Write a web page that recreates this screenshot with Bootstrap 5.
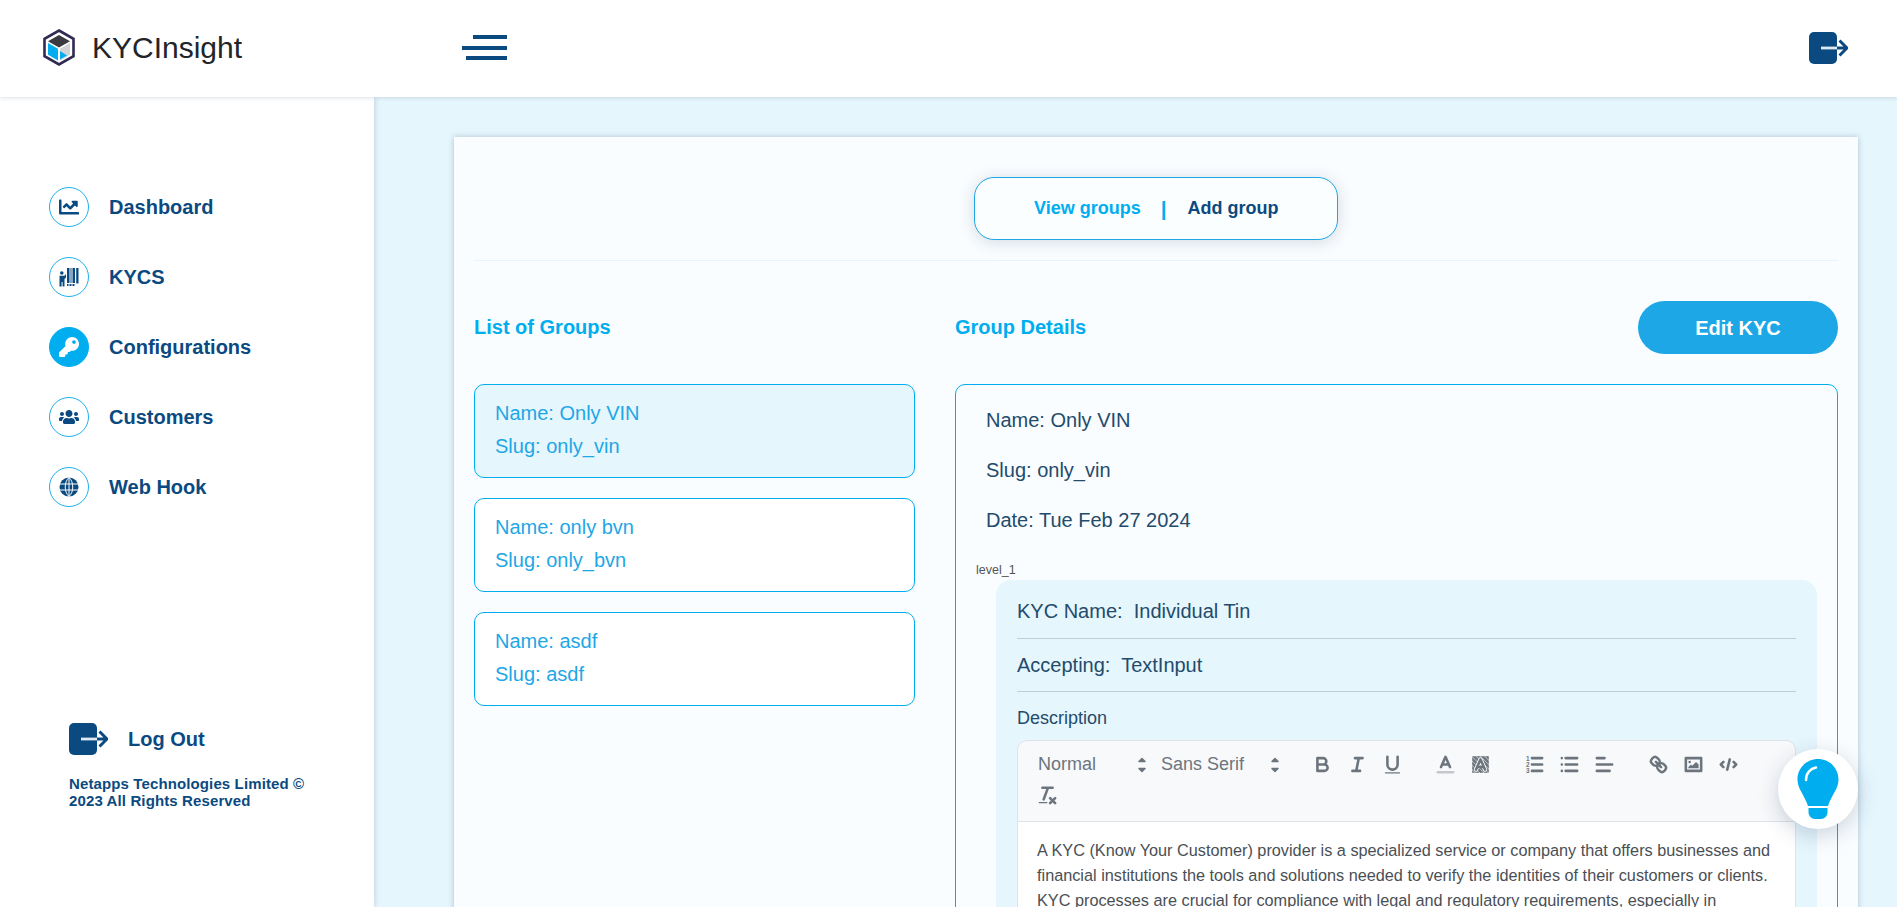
<!DOCTYPE html>
<html lang="en">

<head>
  <meta charset="UTF-8" />
  <meta name="viewport" content="width=device-width, initial-scale=1" />
  <title>KYCInsight</title>
  <link href="https://cdn.jsdelivr.net/npm/bootstrap@5.3.3/dist/css/bootstrap.min.css" rel="stylesheet">
  <style>
    body { height: 100vh; overflow: hidden; font-family: "Liberation Sans", Arial, sans-serif; background: #e6f6fd; }
    .top-bar { height: 97px; flex: none; background: #fff; position: relative; z-index: 3; box-shadow: 0 1px 4px rgba(0, 40, 80, .14); padding: 0 49px 2px 43px; }
    .brand-box { width: 419px; }
    .brand-name { font-size: 30px; color: #212529; margin-left: 17px; line-height: 1; }
    .burger { width: 45px; }
    .burger i { display: block; height: 4px; background: #0b4a7f; margin-left: auto; }
    .burger i + i { margin-top: 6.5px; }
    .side-bar { width: 374px; flex: none; background: #fff; position: relative; z-index: 2; box-shadow: 1px 0 5px rgba(0, 40, 80, .16); padding: 90px 0 98px 49px; }
    .side-item { height: 40px; margin-bottom: 30px; color: #0b4a80; font-size: 20px; font-weight: 700; text-decoration: none; }
    .side-dot { width: 40px; height: 40px; border: 1px solid #1eb0ee; border-radius: 50%; margin-right: 20px; color: #0b4a80; }
    .side-dot.is-on { background: #00aeef; border-color: #00aeef; color: #fff; }
    .logout-row { padding-left: 20px; color: #0b4a80; font-size: 20px; font-weight: 700; height: 32px; }
    .logout-row svg { margin-right: 20px; }
    .copy-text { margin: 20px 0 0 20px; width: 250px; color: #0b4a80; font-size: 15px; line-height: 17px; font-weight: 700; letter-spacing: .12px; }
    .main-area { padding: 40px 39px 0 80px; min-width: 0; }
    .sheet { background: #fafdff; padding: 40px 20px 0; box-shadow: 0 0 6px rgba(0, 40, 80, .25); min-height: 900px; }
    .tab-pill { width: 364px; height: 63px; border: 1px solid #1ea7e6; border-radius: 20px; box-shadow: 0 2px 16px rgba(0, 40, 80, .16); font-size: 18px; font-weight: 700; padding-left: 59px; background: #fbfeff; }
    .tab-on { color: #00aeef; }
    .tab-off { color: #0b4a7f; }
    .tab-sep { color: #00aeef; margin: 0 21px 0 20px; font-weight: 700; font-size: 21px; line-height: 1; }
    .sheet-rule { border-top: 1px solid #e5f5fd; margin-top: 20px; height: 41px; }
    .col-list { width: 441px; flex: none; margin-right: 40px; }
    .col-detail { flex: 1; min-width: 0; }
    .col-title { color: #00aeef; font-size: 20px; font-weight: 700; height: 53px; line-height: 52px; margin-bottom: 30px; }
    .edit-btn { width: 200px; height: 53px; border-radius: 27px; background: #1ea7e6; border: 0; color: #fff; font-size: 20px; font-weight: 700; }
    .edit-btn:hover { background: #1ea7e6; color: #fff; }
    .group-box { height: 94px; border: 1px solid #00aeef; border-radius: 10px; padding: 12px 20px; margin-bottom: 20px; background: #fff; color: #1ea7e6; font-size: 20px; line-height: 33px; }
    .group-box.is-on { background: #e6f6fd; }
    .detail-box { border: 1px solid #00aeef; border-radius: 10px; padding: 20px 20px 0 20px; color: #234b6b; font-size: 20px; }
    .detail-line { line-height: 30px; margin: 0 0 20px 10px; }
    .level-tag { font-size: 12.5px; line-height: 16px; color: #555; margin-top: 27px; margin-bottom: 2px; }
    .kyc-box { margin: 0 0 0 20px; background: #e6f6fd; border-radius: 15px; padding: 16px 21px 0; }
    .kyc-line { line-height: 30px; padding-bottom: 11px; border-bottom: 1px solid #c0ced8; margin-bottom: 11px; }
    .kyc-line:first-child { padding-bottom: 12px; }
    .desc-label { font-size: 18px; line-height: 26px; color: #234b6b; margin-top: 13px; margin-bottom: 9px; }
    .ed-bar { background: #f8f9fb; border: 1px solid #dde3e8; border-radius: 10px 10px 0 0; padding: 8px 12px 10px; }
    .ed-group { margin-right: 19px; }
    .ed-group.is-tight { margin-right: 18px; }
    .ed-pick { height: 31px; padding-left: 8px; color: #6c757d; font-size: 18px; line-height: 31px; }
    .ed-pick svg { margin-left: auto; }
    .pick-a { width: 123px; }
    .pick-b { width: 133px; }
    .ed-btn { width: 35px; height: 31px; }
    .ed-btn svg { width: 23px; height: 23px; fill: none; stroke: #6c757d; stroke-width: 2; stroke-linecap: round; stroke-linejoin: round; }
    .ed-btn .solid { fill: #6c757d; stroke: none; }
    .ed-text { background: #fff; border: 1px solid #dde3e8; border-top: 0; padding: 16px 19px; color: #4a4f55; font-size: 16.25px; line-height: 25px; }
    .help-fab { position: fixed; left: 1778px; top: 749px; width: 80px; height: 80px; border-radius: 50%; background: #fff; box-shadow: 0 6px 22px rgba(0, 40, 80, .2); z-index: 5; }
  </style>
</head>

<body class="d-flex flex-column">
  <svg width="0" height="0" class="position-absolute">
    <symbol id="exit-icon" viewBox="0 0 39 32">
      <rect x="0" y="0" width="28" height="32" rx="5" fill="#0b4a80" />
      <path d="M12 16H28" stroke="#dfeaf3" stroke-width="2.800" />
      <path d="M28 16H37M30.500 8.500L38 16L30.500 23.500" stroke="#0b4a80" stroke-width="3" fill="none" />
    </symbol>
  </svg>

  <header class="top-bar d-flex align-items-center">
    <div class="brand-box d-flex align-items-center">
      <svg width="32" height="37" viewBox="0 0 32 37">
        <path d="M16 1.500L30.500 9.800V27.200L16 35.500L1.500 27.200V9.800Z" fill="#fff" stroke="#2f2b52" stroke-width="2.600" />
        <path d="M16 6L27 12.300L16 18.500L5 12.300Z" fill="#3b3a40" />
        <path d="M5 14L15 19.800V31.500L5 25.700Z" fill="#00aeef" />
        <path d="M17 19.800L27 14V25.700L17 31.500Z" fill="#d2d4d6" />
        <path d="M17 22L24 26.500L17 30.500Z" fill="#00aeef" />
      </svg>
      <span class="brand-name">KYCInsight</span>
    </div>
    <div class="burger">
      <i style="width: 34px"></i>
      <i style="width: 45px"></i>
      <i style="width: 41px"></i>
    </div>
    <svg class="ms-auto" width="39" height="32"><use href="#exit-icon" /></svg>
  </header>

  <div class="d-flex flex-grow-1" style="min-height: 0">
    <aside class="side-bar d-flex flex-column">
      <a href="#" class="side-item d-flex align-items-center">
        <span class="side-dot d-flex align-items-center justify-content-center">
          <svg width="20" height="20" viewBox="0 0 512 512" fill="currentColor"><path d="M496 384H64V80c0-8.840-7.160-16-16-16H16C7.160 64 0 71.160 0 80v336c0 17.670 14.330 32 32 32h464c8.840 0 16-7.160 16-16v-32c0-8.840-7.160-16-16-16zM464 96H345.940c-21.380 0-32.090 25.850-16.970 40.970l32.400 32.400L288 242.750l-73.370-73.370c-12.500-12.500-32.760-12.500-45.250 0l-68.690 68.690c-6.250 6.250-6.250 16.380 0 22.630l22.620 22.620c6.250 6.250 16.380 6.250 22.630 0L192 237.250l73.370 73.370c12.500 12.500 32.760 12.500 45.250 0l96-96 32.400 32.400c15.120 15.120 40.970 4.410 40.970-16.970V112c.01-8.840-7.150-16-16-16z" /></svg>
        </span>Dashboard
      </a>
      <a href="#" class="side-item d-flex align-items-center">
        <span class="side-dot d-flex align-items-center justify-content-center">
          <svg width="20" height="20" viewBox="0 0 20 20" fill="currentColor">
            <circle cx="2.800" cy="6" r="1.800" />
            <path d="M0.500 8.800H5.500L7 7V10.500L5.500 12V19.500H3.600V15H2.600V19.500H0.500Z" />
            <path d="M8 1H10.500V16H8zM11.500 1H12.500V16H11.500zM13.500 1H16V16H13.500zM17.200 1H19.500V16.500H17.200zM8 17H9.500V19H8zM10.500 17H12.500V19H10.500zM13.500 17H15.500V19H13.500z" />
          </svg>
        </span>KYCS
      </a>
      <a href="#" class="side-item d-flex align-items-center">
        <span class="side-dot is-on d-flex align-items-center justify-content-center">
          <svg width="20" height="20" viewBox="0 0 512 512" fill="currentColor"><path d="M512 176.001C512 273.203 433.202 352 336 352c-11.220 0-22.190-1.062-32.827-3.069l-24.012 27.014A23.999 23.999 0 0 1 261.223 384H224v40c0 13.255-10.745 24-24 24h-40v40c0 13.255-10.745 24-24 24H24c-13.255 0-24-10.745-24-24v-78.059c0-6.365 2.529-12.470 7.029-16.971l161.802-161.802C163.108 213.814 160 195.271 160 176 160 78.798 238.797.001 335.999 0 433.488-.001 512 78.511 512 176.001zM336 128c0 26.510 21.490 48 48 48s48-21.490 48-48-21.490-48-48-48-48 21.490-48 48z" /></svg>
        </span>Configurations
      </a>
      <a href="#" class="side-item d-flex align-items-center">
        <span class="side-dot d-flex align-items-center justify-content-center">
          <svg width="20" height="16" viewBox="0 0 640 512" fill="currentColor"><path d="M96 224c35.300 0 64-28.700 64-64s-28.700-64-64-64-64 28.700-64 64 28.700 64 64 64zm448 0c35.300 0 64-28.700 64-64s-28.700-64-64-64-64 28.700-64 64 28.700 64 64 64zm32 32h-64c-17.600 0-33.500 7.100-45.100 18.600 40.300 22.100 68.900 62 75.100 109.400h66c17.700 0 32-14.300 32-32v-32c0-35.300-28.700-64-64-64zm-256 0c61.900 0 112-50.100 112-112S381.900 32 320 32 208 82.100 208 144s50.100 112 112 112zm76.800 32h-8.300c-20.800 10-43.900 16-68.500 16s-47.600-6-68.500-16h-8.300C179.600 288 128 339.600 128 403.200V432c0 26.500 21.500 48 48 48h288c26.500 0 48-21.500 48-48v-28.800c0-63.600-51.600-115.200-115.200-115.200zm-223.700-13.400C161.500 263.100 145.600 256 128 256H64c-35.300 0-64 28.700-64 64v32c0 17.700 14.300 32 32 32h65.900c6.300-47.400 34.900-87.300 75.200-109.400z" /></svg>
        </span>Customers
      </a>
      <a href="#" class="side-item d-flex align-items-center">
        <span class="side-dot d-flex align-items-center justify-content-center">
          <svg width="20" height="20" viewBox="0 0 20 20">
            <circle cx="10" cy="10" r="9.500" fill="currentColor" />
            <path d="M0.500 7H19.500M0.500 13H19.500M10 0.500V19.500M10 0.500C5 5 5 15 10 19.500M10 0.500C15 5 15 15 10 19.500" stroke="#fff" stroke-width="1" fill="none" />
          </svg>
        </span>Web Hook
      </a>
      <div class="logout-row d-flex align-items-center mt-auto">
        <svg width="39" height="32"><use href="#exit-icon" /></svg>Log Out
      </div>
      <div class="copy-text">Netapps Technologies Limited © 2023 All Rights Reserved</div>
    </aside>

    <main class="main-area flex-grow-1">
      <div class="sheet">
        <div class="d-flex justify-content-center">
          <div class="tab-pill d-flex align-items-center">
            <span class="tab-on">View groups</span><span class="tab-sep">|</span><span class="tab-off">Add group</span>
          </div>
        </div>
        <div class="sheet-rule"></div>

        <div class="d-flex">
          <div class="col-list">
            <div class="col-title">List of Groups</div>
            <div class="group-box is-on">Name: Only VIN<br>Slug: only_vin</div>
            <div class="group-box">Name: only bvn<br>Slug: only_bvn</div>
            <div class="group-box">Name: asdf<br>Slug: asdf</div>
          </div>

          <div class="col-detail">
            <div class="d-flex justify-content-between">
              <div class="col-title">Group Details</div>
              <button type="button" class="btn edit-btn">Edit KYC</button>
            </div>
            <div class="detail-box">
              <div class="detail-line">Name: Only VIN</div>
              <div class="detail-line">Slug: only_vin</div>
              <div class="detail-line">Date: Tue Feb 27 2024</div>
              <div class="level-tag">level_1</div>
              <div class="kyc-box">
                <div class="kyc-line">KYC Name:&nbsp; Individual Tin</div>
                <div class="kyc-line">Accepting:&nbsp; TextInput</div>
                <div class="desc-label">Description</div>
                <div class="ed-bar d-flex flex-wrap">
                  <div class="ed-group d-flex">
                    <div class="ed-pick pick-a d-flex"><span>Normal</span><svg width="22" height="32" viewBox="0 0 22 32" fill="#6c757d" stroke="#6c757d" stroke-width="1.500" stroke-linejoin="round"><path d="M11 9.500L14 12.500H8ZM11 22.500L14 19.500H8Z" /></svg></div>
                    <div class="ed-pick pick-b d-flex"><span>Sans Serif</span><svg width="22" height="32" viewBox="0 0 22 32" fill="#6c757d" stroke="#6c757d" stroke-width="1.500" stroke-linejoin="round"><path d="M11 9.500L14 12.500H8ZM11 22.500L14 19.500H8Z" /></svg></div>
                  </div>
                  <div class="ed-group is-tight d-flex">
                    <div class="ed-btn d-flex align-items-center justify-content-center"><svg viewBox="0 0 18 18"><path d="M5 4H9.500A2.500 2.500 0 0 1 12 6.500A2.500 2.500 0 0 1 9.500 9H5ZM5 9H10.500A2.500 2.500 0 0 1 13 11.500A2.500 2.500 0 0 1 10.500 14H5Z" /></svg></div>
                    <div class="ed-btn d-flex align-items-center justify-content-center"><svg viewBox="0 0 18 18"><path d="M7 4H13M5 14H11M8 14L10 4" /></svg></div>
                    <div class="ed-btn d-flex align-items-center justify-content-center"><svg viewBox="0 0 18 18"><path d="M5 3V9A4 4 0 0 0 9 13A4 4 0 0 0 13 9V3" /><rect class="solid" x="3" y="15" width="12" height="1" rx=".5" /></svg></div>
                  </div>
                  <div class="ed-group d-flex">
                    <div class="ed-btn d-flex align-items-center justify-content-center"><svg viewBox="0 0 18 18"><path d="M3 15H15" style="stroke: #c4c8cc" /><path d="M5.500 11L9 3L12.500 11M11.630 9H6.380" /></svg></div>
                    <div class="ed-btn d-flex align-items-center justify-content-center"><svg viewBox="0 0 18 18"><defs><pattern id="hatch" width="2.400" height="2.400" patternUnits="userSpaceOnUse" patternTransform="rotate(-45)"><rect width="1.100" height="1.600" fill="#6c757d" /></pattern></defs><rect x="2.500" y="2.500" width="13" height="13" fill="url(#hatch)" stroke="none" /><path d="M5.500 13L9 5L12.500 13" style="stroke: #f8f9fb; stroke-width: 3.400" /><path d="M5.500 13L9 5L12.500 13M11.630 11H6.380" /></svg></div>
                  </div>
                  <div class="ed-group d-flex">
                    <div class="ed-btn d-flex align-items-center justify-content-center"><svg viewBox="0 0 18 18"><path d="M7 4H15M7 9H15M7 14H15" /><text x="2.300" y="6" font-size="5" font-weight="700" fill="#6c757d" stroke="none">1</text><text x="2.300" y="11" font-size="5" font-weight="700" fill="#6c757d" stroke="none">2</text><text x="2.300" y="16" font-size="5" font-weight="700" fill="#6c757d" stroke="none">3</text></svg></div>
                    <div class="ed-btn d-flex align-items-center justify-content-center"><svg viewBox="0 0 18 18"><path d="M6 4H15M6 9H15M6 14H15M3 4V4M3 9V9M3 14V14" /></svg></div>
                    <div class="ed-btn d-flex align-items-center justify-content-center"><svg viewBox="0 0 18 18"><path d="M3 9H15M3 14H13M3 4H9" /></svg></div>
                  </div>
                  <div class="ed-group d-flex">
                    <div class="ed-btn d-flex align-items-center justify-content-center"><svg viewBox="0 0 18 18"><path d="M7 7L11 11" /><path d="M8.900 4.577a3.476 3.476 0 0 1 .36 4.679A3.476 3.476 0 0 1 4.577 8.900C3.185 7.500 2.035 6.400 4.217 4.217S7.500 3.185 8.900 4.577Z" /><path d="M13.423 9.100a3.476 3.476 0 0 0-4.679-.36 3.476 3.476 0 0 0 .36 4.679c1.392 1.392 2.500 2.542 4.679.36S14.815 10.500 13.423 9.100Z" /></svg></div>
                    <div class="ed-btn d-flex align-items-center justify-content-center"><svg viewBox="0 0 18 18"><rect x="3" y="4" width="12" height="10" /><circle class="solid" cx="6" cy="7" r="1" /><path class="solid" d="M5 12V11L7 9L8 10L11 7L13 9V12Z" /></svg></div>
                    <div class="ed-btn d-flex align-items-center justify-content-center"><svg viewBox="0 0 18 18"><path d="M5 7L3 9L5 11M13 7L15 9L13 11M10 5L8 13" /></svg></div>
                  </div>
                  <div class="ed-group d-flex">
                    <div class="ed-btn d-flex align-items-center justify-content-center"><svg viewBox="0 0 18 18"><path d="M5 3H13M6 12L9.350 3M11 11L15 15M15 11L11 15" /><rect class="solid" x="2" y="14" width="7" height="1" rx=".5" /></svg></div>
                  </div>
                </div>
                <div class="ed-text">A KYC (Know Your Customer) provider is a specialized service or company that offers businesses and financial institutions the tools and solutions needed to verify the identities of their customers or clients. KYC processes are crucial for compliance with legal and regulatory requirements, especially in</div>
              </div>
            </div>
          </div>
        </div>
      </div>
    </main>
  </div>

  <div class="help-fab d-flex align-items-center justify-content-center">
    <svg width="42" height="60" viewBox="0 0 42 60">
      <path d="M21 0C9.500 0 .500 9 .500 20.500C.500 30 7 35 11 47H31C35 35 41.500 30 41.500 20.500C41.500 9 32.500 0 21 0Z" fill="#00aeef" />
      <path d="M9 21C9 14 13.500 9.500 19 8.500" stroke="#fff" stroke-width="2.600" stroke-linecap="round" fill="none" />
      <path d="M11.500 49H30.500V53C30.500 57 27.500 60 24 60H18C14.500 60 11.500 57 11.500 53Z" fill="#00aeef" />
    </svg>
  </div>
</body>

</html>
